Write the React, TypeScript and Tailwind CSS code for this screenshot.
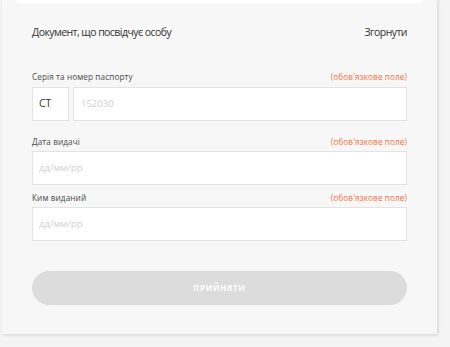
import React from "react";

const FIELDS = [
  { label: "Дата видачі", placeholder: "дд/мм/рр", gap: "mt-[12px]" },
  { label: "Ким виданий", placeholder: "дд/мм/рр", gap: "mt-[4px]" },
];

function Label({ text }: { text: string }) {
  return (
    <div className="flex items-center justify-between h-[18px] text-[8.2px] tracking-[0.1px] leading-none">
      <span className="text-[#4a4a4a]">{text}</span>
      <span className="text-[#f5703f]">(обов'язкове поле)</span>
    </div>
  );
}

export default function App() {
  return (
    <div className="w-[450px] h-[347px] bg-[#f4f4f4] font-['Open_Sans',sans-serif] overflow-hidden">
      <div className="relative ml-[2px] w-[435px] h-[334px] bg-[#f7f7f7] shadow-[1px_1px_3px_rgba(0,0,0,0.15)] px-[30px]">
        <div className="absolute top-0 left-[15px] w-[405px] h-[3px] bg-white" />
        <div className="flex items-center justify-between pt-[24px] h-[42px] text-[10.5px] tracking-[-0.55px] text-[#333]">
          <span>Документ, що посвідчує особу</span>
          <span>Згорнути</span>
        </div>

        <div className="mt-[26px]">
          <Label text="Серія та номер паспорту" />
          <div className="flex gap-[4px] mt-[1px]">
            <div className="w-[37px] h-[34px] bg-white border border-[#e3e3e3] flex items-center pl-[6px] text-[10.5px] text-[#333]">
              CT
            </div>
            <div className="flex-1 h-[34px] bg-white border border-[#e3e3e3] flex items-center pl-[7px] text-[9.5px] text-[#cfcfcf]">
              152030
            </div>
          </div>
        </div>

        {FIELDS.map((f) => (
          <div key={f.label} className={f.gap}>
            <Label text={f.label} />
            <div className="h-[34px] bg-white border border-[#e3e3e3] flex items-center pl-[6px] text-[9.5px] text-[#cfcfcf]">
              {f.placeholder}
            </div>
          </div>
        ))}

        <button className="mt-[30px] w-full h-[34px] rounded-full bg-[#dcdcdc] text-white text-[8px] font-bold tracking-[0.7px] flex items-center justify-center">
          ПРИЙНЯТИ
        </button>
      </div>
    </div>
  );
}
